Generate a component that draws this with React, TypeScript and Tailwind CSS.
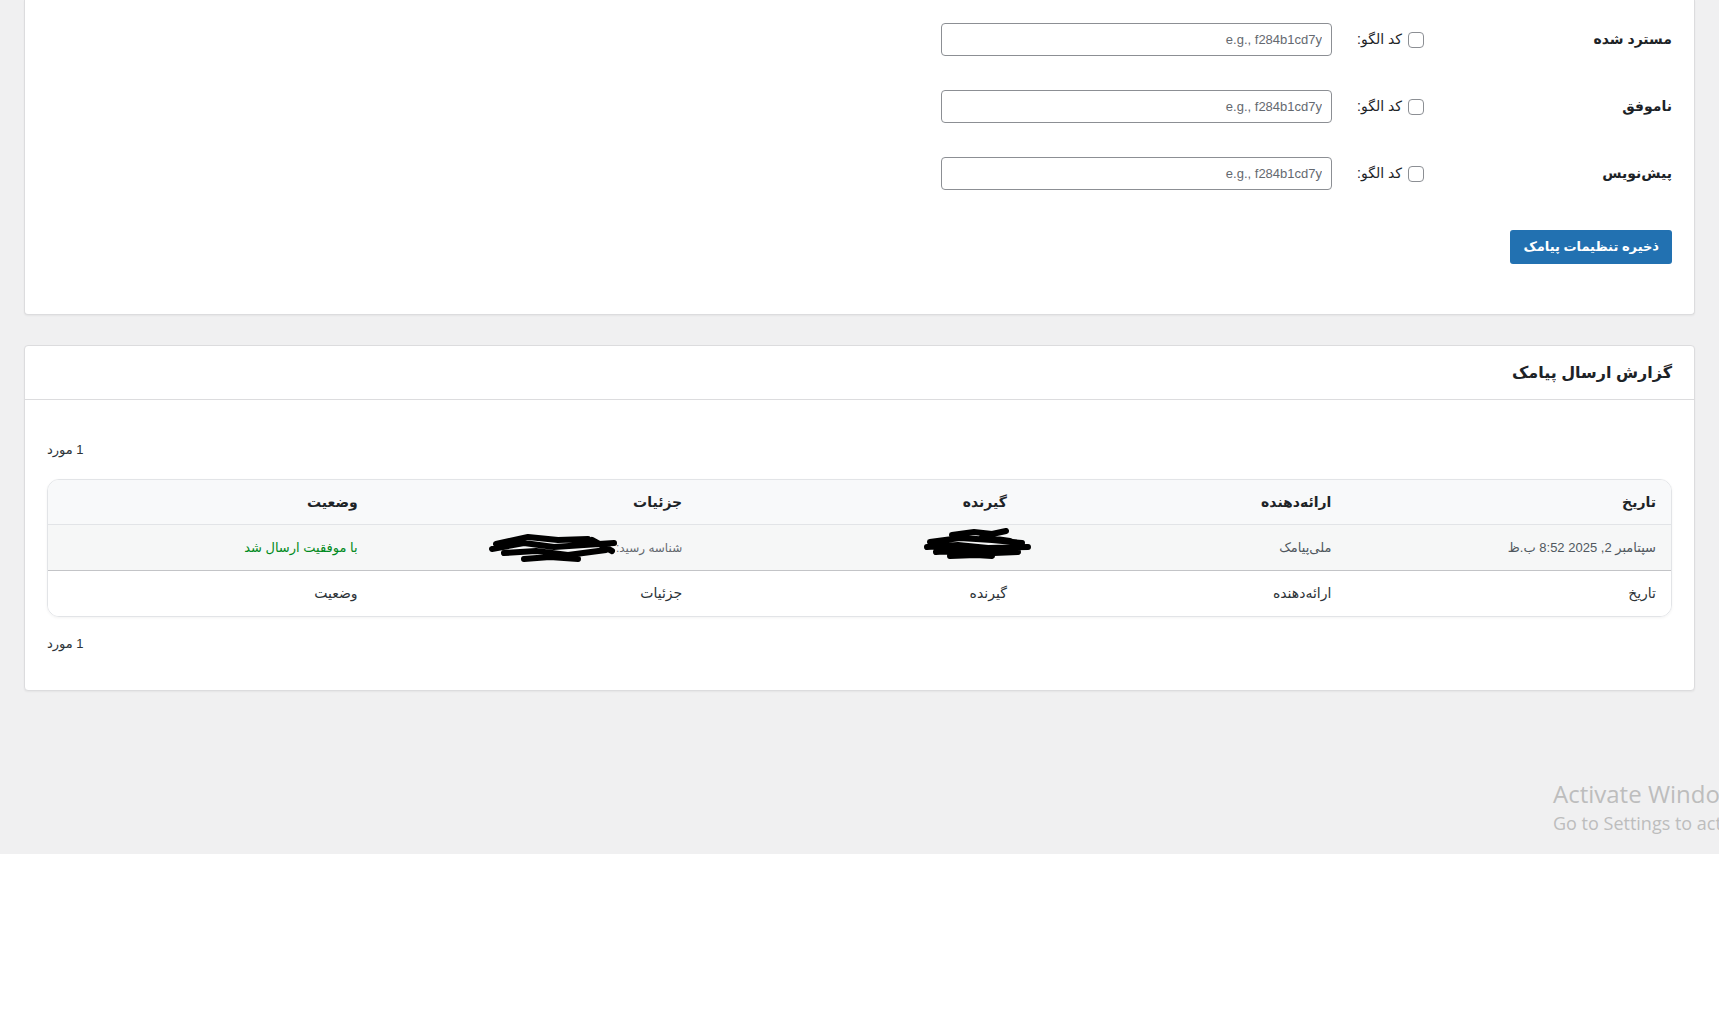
import React from "react";

const fa = "font-['Liberation_Sans','DejaVu_Sans',sans-serif]";

const patternRows = ["مسترد شده", "ناموفق", "پیش‌نویس"];
const columns = ["تاریخ", "ارائه‌دهنده", "گیرنده", "جزئیات", "وضعیت"];

function Scribble({ w, h, d }: { w: number; h: number; d: string }) {
  return (
    <svg width={w} height={h} viewBox={`0 0 ${w} ${h}`} className="block">
      <path d={d} fill="none" stroke="#000" strokeWidth="6" strokeLinecap="round" strokeLinejoin="round" />
    </svg>
  );
}

function PatternRow({ label }: { label: string }) {
  return (
    <div className="flex items-center h-[33px]">
      <div className="w-[248px] text-[14px] font-bold text-[#1d2327]">{label}</div>
      <input
        type="checkbox"
        className="appearance-none w-4 h-4 shrink-0 rounded-[4px] border border-[#8c8f94] bg-white"
      />
      <span className="w-[76px] pr-[6px] text-[14px] text-[#1d2327]">کد الگو:</span>
      <input
        type="text"
        placeholder="e.g., f284b1cd7y"
        className={`w-[391px] h-[33px] rounded-[4px] border border-[#8c8f94] bg-white px-[9px] text-[13px] text-[#2c3338] placeholder:text-[#646970] outline-none ${fa}`}
      />
    </div>
  );
}

export default function App() {
  return (
    <div dir="rtl" className={`relative min-h-[1024px] bg-white overflow-hidden ${fa}`}>
      <div className="h-[854px] bg-[#f0f0f1] px-[24px]">
        {/* pattern settings */}
        <div className="bg-white border border-t-0 border-[#dcdcde] rounded-b-[4px] shadow-[0_1px_2px_rgba(0,0,0,0.05)] px-[22px] pt-[23px] pb-[50px]">
          <div className="flex flex-col gap-[34px]">
            {patternRows.map((r) => (
              <PatternRow key={r} label={r} />
            ))}
          </div>
          <button className="mt-[40px] h-[34px] px-[13px] rounded-[3px] bg-[#2271b1] text-white text-[13px] font-bold">
            ذخیره تنظیمات پیامک
          </button>
        </div>

        {/* send log */}
        <div className="mt-[30px] bg-white border border-[#dcdcde] rounded-[4px] shadow-[0_1px_2px_rgba(0,0,0,0.05)]">
          <div className="h-[54px] flex items-center px-[22px] border-b border-[#dcdcde]">
            <h2 className="text-[16px] font-bold text-[#1d2327]">گزارش ارسال پیامک</h2>
          </div>
          <div className="px-[22px] pt-[40px] pb-[36px]">
            <div className="text-left text-[13px] text-[#2c3338] h-[20px] leading-[20px]">1 مورد</div>
            <div className="mt-[19px] border border-[#e2e4e7] rounded-[12px] overflow-hidden shadow-[0_1px_3px_rgba(0,0,0,0.05)]">
              <div className="grid grid-cols-5 h-[45px] items-center bg-[#f8f9fa] border-b border-[#e2e4e7]">
                {columns.map((c) => (
                  <div key={c} className="px-[15px] text-[14px] font-bold text-[#1d2327]">{c}</div>
                ))}
              </div>
              <div className="grid grid-cols-5 h-[46px] items-center bg-[#f6f7f7] border-b border-[#c3c4c7]">
                <div className="px-[15px] text-[13px] text-[#50575e]">سپتامبر 2, 2025 8:52 ب.ظ</div>
                <div className="px-[15px] text-[13px] text-[#50575e]">ملی‌پیامک</div>
                <div className="px-[15px] relative h-full">
                  <div className="absolute right-[-12px] top-[3px]">
                    <Scribble w={112} h={31} d="M30 7 L52 4 L70 6 L84 3 M8 14 L38 10 L70 12 L100 15 M5 19 L36 17 L66 20 L106 19 M14 24 L44 22 L72 25 L96 24 M28 28 L54 27 L70 28 M60 9 L88 13" />
                  </div>
                </div>
                <div className="px-[15px] flex items-center">
                  <span className="text-[12px] text-[#646970]">شناسه رسید:</span>
                  <span className="-mr-[4px]">
                    <Scribble w={132} h={33} d="M8 13 L40 6 L70 9 L100 8 M4 18 L36 12 L66 16 L96 14 L126 12 M16 22 L48 20 L80 24 L118 19 M36 28 L62 26 L90 28 M104 9 L124 20" />
                  </span>
                </div>
                <div className="px-[15px] text-[13px] text-[#008a20]">با موفقیت ارسال شد</div>
              </div>
              <div className="grid grid-cols-5 h-[45px] items-center bg-white">
                {columns.map((c) => (
                  <div key={c} className="px-[15px] text-[14px] text-[#2c3338]">{c}</div>
                ))}
              </div>
            </div>
            <div className="mt-[17px] text-left text-[13px] text-[#2c3338] h-[20px] leading-[20px]">1 مورد</div>
          </div>
        </div>
      </div>

      {/* windows activation overlay */}
      <div dir="ltr" className="absolute left-[1553px] top-[778px] whitespace-nowrap pointer-events-none font-['Open_Sans',sans-serif] text-[#bdbdbd]">
        <div className="text-[24px] leading-[32px]">Activate Windows</div>
        <div className="text-[18px] leading-[26px]">Go to Settings to activate Windows.</div>
      </div>
    </div>
  );
}
